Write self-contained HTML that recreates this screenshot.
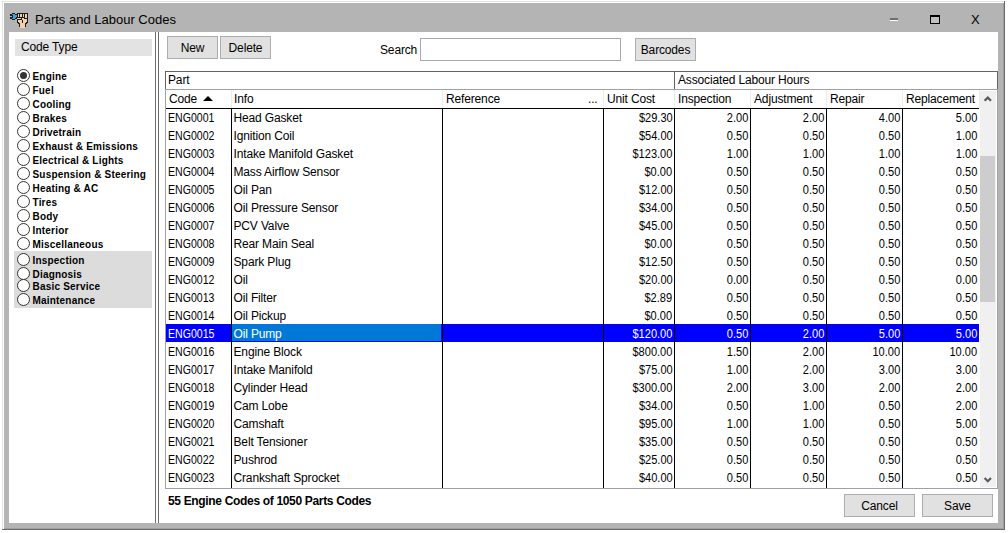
<!DOCTYPE html>
<html><head><meta charset="utf-8">
<style>
*{margin:0;padding:0;box-sizing:border-box}
html,body{width:1008px;height:533px;overflow:hidden;background:#fff;position:relative;font-family:"Liberation Sans",sans-serif;color:#000}
.a{position:absolute}
.t{position:absolute;white-space:nowrap;font-size:12px;line-height:13px;letter-spacing:-0.15px}
.cd{letter-spacing:0;transform:scaleX(0.88);transform-origin:0 0}
.nm{letter-spacing:-0.55px}
.btn{position:absolute;background:#e1e1e1;border:1px solid #adadad;font-size:12px;text-align:center;letter-spacing:-0.15px;padding-top:1px}
.rb{position:absolute;width:13px;height:13px;border:1px solid #333;border-radius:50%;background:#fff}
.rl{position:absolute;white-space:nowrap;font-size:10px;font-weight:bold;line-height:12px;letter-spacing:0.2px}
.vl{position:absolute;width:1px;background:#000}
.num{position:absolute;white-space:nowrap;font-size:12px;line-height:13px;text-align:right;letter-spacing:0;transform:scaleX(0.92);transform-origin:100% 0}
</style></head><body>

<div class="a" style="left:2px;top:1px;width:1003px;height:529px;background:#e3e3e3"></div>
<div class="a" style="left:3px;top:2px;width:1001px;height:527px;background:#fff"></div>
<div class="a" style="left:1004px;top:1px;width:1px;height:529px;background:#6a6a6a"></div>
<div class="a" style="left:2px;top:529px;width:1003px;height:1px;background:#6a6a6a"></div>
<div class="a" style="left:4px;top:3px;width:1000px;height:526px;background:#b4b4b4"></div>
<div class="a" style="left:1003px;top:3px;width:1px;height:526px;background:#a0a0a0"></div>
<div class="a" style="left:4px;top:528px;width:1000px;height:1px;background:#a0a0a0"></div>
<div class="a" style="left:9px;top:32px;width:989px;height:491px;background:#fff"></div>
<div class="t" style="left:35px;top:12px;font-size:13px;line-height:16px;color:#000;letter-spacing:0">Parts and Labour Codes</div>
<svg class="a" style="left:10px;top:13px" width="18" height="15" viewBox="0 0 18 15" shape-rendering="crispEdges"><rect x="2" y="0" width="1" height="1" fill="#1c1c1c"/><rect x="3" y="0" width="1" height="1" fill="#1c1c1c"/><rect x="4" y="0" width="1" height="1" fill="#1c1c1c"/><rect x="7" y="0" width="1" height="1" fill="#1c1c1c"/><rect x="8" y="0" width="1" height="1" fill="#1c1c1c"/><rect x="9" y="0" width="1" height="1" fill="#1c1c1c"/><rect x="10" y="0" width="1" height="1" fill="#1c1c1c"/><rect x="11" y="0" width="1" height="1" fill="#1c1c1c"/><rect x="12" y="0" width="1" height="1" fill="#1c1c1c"/><rect x="13" y="0" width="1" height="1" fill="#1c1c1c"/><rect x="14" y="0" width="1" height="1" fill="#1c1c1c"/><rect x="15" y="0" width="1" height="1" fill="#1c1c1c"/><rect x="16" y="0" width="1" height="1" fill="#1c1c1c"/><rect x="17" y="0" width="1" height="1" fill="#1c1c1c"/><rect x="0" y="1" width="1" height="1" fill="#1c1c1c"/><rect x="1" y="1" width="1" height="1" fill="#1c1c1c"/><rect x="2" y="1" width="1" height="1" fill="#3aa5d6"/><rect x="3" y="1" width="1" height="1" fill="#3aa5d6"/><rect x="4" y="1" width="1" height="1" fill="#3aa5d6"/><rect x="5" y="1" width="1" height="1" fill="#1c1c1c"/><rect x="6" y="1" width="1" height="1" fill="#1c1c1c"/><rect x="7" y="1" width="1" height="1" fill="#1c1c1c"/><rect x="8" y="1" width="1" height="1" fill="#f5d1ab"/><rect x="9" y="1" width="1" height="1" fill="#1c1c1c"/><rect x="10" y="1" width="1" height="1" fill="#f5d1ab"/><rect x="11" y="1" width="1" height="1" fill="#f5d1ab"/><rect x="12" y="1" width="1" height="1" fill="#1c1c1c"/><rect x="13" y="1" width="1" height="1" fill="#f5d1ab"/><rect x="14" y="1" width="1" height="1" fill="#1c1c1c"/><rect x="15" y="1" width="1" height="1" fill="#f5d1ab"/><rect x="16" y="1" width="1" height="1" fill="#f5d1ab"/><rect x="17" y="1" width="1" height="1" fill="#1c1c1c"/><rect x="0" y="2" width="1" height="1" fill="#1c1c1c"/><rect x="1" y="2" width="1" height="1" fill="#1c1c1c"/><rect x="2" y="2" width="1" height="1" fill="#1c1c1c"/><rect x="3" y="2" width="1" height="1" fill="#3aa5d6"/><rect x="4" y="2" width="1" height="1" fill="#3aa5d6"/><rect x="5" y="2" width="1" height="1" fill="#3aa5d6"/><rect x="6" y="2" width="1" height="1" fill="#3aa5d6"/><rect x="7" y="2" width="1" height="1" fill="#1c1c1c"/><rect x="8" y="2" width="1" height="1" fill="#f5d1ab"/><rect x="9" y="2" width="1" height="1" fill="#1c1c1c"/><rect x="10" y="2" width="1" height="1" fill="#f5d1ab"/><rect x="11" y="2" width="1" height="1" fill="#f5d1ab"/><rect x="12" y="2" width="1" height="1" fill="#1c1c1c"/><rect x="13" y="2" width="1" height="1" fill="#f5d1ab"/><rect x="14" y="2" width="1" height="1" fill="#1c1c1c"/><rect x="15" y="2" width="1" height="1" fill="#f5d1ab"/><rect x="16" y="2" width="1" height="1" fill="#f5d1ab"/><rect x="17" y="2" width="1" height="1" fill="#1c1c1c"/><rect x="2" y="3" width="1" height="1" fill="#1c1c1c"/><rect x="3" y="3" width="1" height="1" fill="#3aa5d6"/><rect x="4" y="3" width="1" height="1" fill="#3aa5d6"/><rect x="5" y="3" width="1" height="1" fill="#3aa5d6"/><rect x="6" y="3" width="1" height="1" fill="#3aa5d6"/><rect x="7" y="3" width="1" height="1" fill="#1c1c1c"/><rect x="8" y="3" width="1" height="1" fill="#f5d1ab"/><rect x="9" y="3" width="1" height="1" fill="#1c1c1c"/><rect x="10" y="3" width="1" height="1" fill="#f5d1ab"/><rect x="11" y="3" width="1" height="1" fill="#f5d1ab"/><rect x="12" y="3" width="1" height="1" fill="#1c1c1c"/><rect x="13" y="3" width="1" height="1" fill="#f5d1ab"/><rect x="14" y="3" width="1" height="1" fill="#1c1c1c"/><rect x="15" y="3" width="1" height="1" fill="#f5d1ab"/><rect x="16" y="3" width="1" height="1" fill="#f5d1ab"/><rect x="17" y="3" width="1" height="1" fill="#1c1c1c"/><rect x="0" y="4" width="1" height="1" fill="#1c1c1c"/><rect x="1" y="4" width="1" height="1" fill="#1c1c1c"/><rect x="2" y="4" width="1" height="1" fill="#1c1c1c"/><rect x="3" y="4" width="1" height="1" fill="#3aa5d6"/><rect x="4" y="4" width="1" height="1" fill="#3aa5d6"/><rect x="5" y="4" width="1" height="1" fill="#3aa5d6"/><rect x="6" y="4" width="1" height="1" fill="#1c1c1c"/><rect x="7" y="4" width="1" height="1" fill="#1c1c1c"/><rect x="8" y="4" width="1" height="1" fill="#1c1c1c"/><rect x="9" y="4" width="1" height="1" fill="#1c1c1c"/><rect x="10" y="4" width="1" height="1" fill="#1c1c1c"/><rect x="11" y="4" width="1" height="1" fill="#1c1c1c"/><rect x="12" y="4" width="1" height="1" fill="#1c1c1c"/><rect x="13" y="4" width="1" height="1" fill="#1c1c1c"/><rect x="14" y="4" width="1" height="1" fill="#1c1c1c"/><rect x="15" y="4" width="1" height="1" fill="#f5d1ab"/><rect x="16" y="4" width="1" height="1" fill="#f5d1ab"/><rect x="17" y="4" width="1" height="1" fill="#1c1c1c"/><rect x="0" y="5" width="1" height="1" fill="#1c1c1c"/><rect x="1" y="5" width="1" height="1" fill="#1c1c1c"/><rect x="2" y="5" width="1" height="1" fill="#3aa5d6"/><rect x="3" y="5" width="1" height="1" fill="#3aa5d6"/><rect x="4" y="5" width="1" height="1" fill="#3aa5d6"/><rect x="5" y="5" width="1" height="1" fill="#1c1c1c"/><rect x="6" y="5" width="1" height="1" fill="#1c1c1c"/><rect x="7" y="5" width="1" height="1" fill="#f5d1ab"/><rect x="8" y="5" width="1" height="1" fill="#f5d1ab"/><rect x="9" y="5" width="1" height="1" fill="#f5d1ab"/><rect x="10" y="5" width="1" height="1" fill="#f5d1ab"/><rect x="11" y="5" width="1" height="1" fill="#1c1c1c"/><rect x="12" y="5" width="1" height="1" fill="#f5d1ab"/><rect x="13" y="5" width="1" height="1" fill="#f5d1ab"/><rect x="14" y="5" width="1" height="1" fill="#1c1c1c"/><rect x="15" y="5" width="1" height="1" fill="#1c1c1c"/><rect x="16" y="5" width="1" height="1" fill="#1c1c1c"/><rect x="17" y="5" width="1" height="1" fill="#1c1c1c"/><rect x="2" y="6" width="1" height="1" fill="#1c1c1c"/><rect x="3" y="6" width="1" height="1" fill="#1c1c1c"/><rect x="4" y="6" width="1" height="1" fill="#1c1c1c"/><rect x="7" y="6" width="1" height="1" fill="#1c1c1c"/><rect x="8" y="6" width="1" height="1" fill="#1c1c1c"/><rect x="9" y="6" width="1" height="1" fill="#1c1c1c"/><rect x="10" y="6" width="1" height="1" fill="#1c1c1c"/><rect x="11" y="6" width="1" height="1" fill="#1c1c1c"/><rect x="12" y="6" width="1" height="1" fill="#f5d1ab"/><rect x="13" y="6" width="1" height="1" fill="#f5d1ab"/><rect x="14" y="6" width="1" height="1" fill="#f5d1ab"/><rect x="15" y="6" width="1" height="1" fill="#f5d1ab"/><rect x="16" y="6" width="1" height="1" fill="#f5d1ab"/><rect x="17" y="6" width="1" height="1" fill="#1c1c1c"/><rect x="7" y="7" width="1" height="1" fill="#1c1c1c"/><rect x="8" y="7" width="1" height="1" fill="#f5d1ab"/><rect x="9" y="7" width="1" height="1" fill="#f5d1ab"/><rect x="10" y="7" width="1" height="1" fill="#f5d1ab"/><rect x="11" y="7" width="1" height="1" fill="#f5d1ab"/><rect x="12" y="7" width="1" height="1" fill="#1c1c1c"/><rect x="13" y="7" width="1" height="1" fill="#f5d1ab"/><rect x="14" y="7" width="1" height="1" fill="#f5d1ab"/><rect x="15" y="7" width="1" height="1" fill="#f5d1ab"/><rect x="16" y="7" width="1" height="1" fill="#f5d1ab"/><rect x="17" y="7" width="1" height="1" fill="#1c1c1c"/><rect x="7" y="8" width="1" height="1" fill="#1c1c1c"/><rect x="8" y="8" width="1" height="1" fill="#f5d1ab"/><rect x="9" y="8" width="1" height="1" fill="#f5d1ab"/><rect x="10" y="8" width="1" height="1" fill="#f5d1ab"/><rect x="11" y="8" width="1" height="1" fill="#f5d1ab"/><rect x="12" y="8" width="1" height="1" fill="#1c1c1c"/><rect x="13" y="8" width="1" height="1" fill="#f5d1ab"/><rect x="14" y="8" width="1" height="1" fill="#f5d1ab"/><rect x="15" y="8" width="1" height="1" fill="#f5d1ab"/><rect x="16" y="8" width="1" height="1" fill="#f5d1ab"/><rect x="17" y="8" width="1" height="1" fill="#1c1c1c"/><rect x="7" y="9" width="1" height="1" fill="#1c1c1c"/><rect x="8" y="9" width="1" height="1" fill="#1c1c1c"/><rect x="9" y="9" width="1" height="1" fill="#f5d1ab"/><rect x="10" y="9" width="1" height="1" fill="#f5d1ab"/><rect x="11" y="9" width="1" height="1" fill="#f5d1ab"/><rect x="12" y="9" width="1" height="1" fill="#1c1c1c"/><rect x="13" y="9" width="1" height="1" fill="#f5d1ab"/><rect x="14" y="9" width="1" height="1" fill="#f5d1ab"/><rect x="15" y="9" width="1" height="1" fill="#f5d1ab"/><rect x="16" y="9" width="1" height="1" fill="#1c1c1c"/><rect x="17" y="9" width="1" height="1" fill="#1c1c1c"/><rect x="8" y="10" width="1" height="1" fill="#1c1c1c"/><rect x="9" y="10" width="1" height="1" fill="#1c1c1c"/><rect x="10" y="10" width="1" height="1" fill="#f5d1ab"/><rect x="11" y="10" width="1" height="1" fill="#f5d1ab"/><rect x="12" y="10" width="1" height="1" fill="#f5d1ab"/><rect x="13" y="10" width="1" height="1" fill="#f5d1ab"/><rect x="14" y="10" width="1" height="1" fill="#f5d1ab"/><rect x="15" y="10" width="1" height="1" fill="#1c1c1c"/><rect x="16" y="10" width="1" height="1" fill="#1c1c1c"/><rect x="9" y="11" width="1" height="1" fill="#1c1c1c"/><rect x="10" y="11" width="1" height="1" fill="#f5d1ab"/><rect x="11" y="11" width="1" height="1" fill="#f5d1ab"/><rect x="12" y="11" width="1" height="1" fill="#f5d1ab"/><rect x="13" y="11" width="1" height="1" fill="#f5d1ab"/><rect x="14" y="11" width="1" height="1" fill="#f5d1ab"/><rect x="15" y="11" width="1" height="1" fill="#1c1c1c"/><rect x="9" y="12" width="1" height="1" fill="#1c1c1c"/><rect x="10" y="12" width="1" height="1" fill="#f5d1ab"/><rect x="11" y="12" width="1" height="1" fill="#f5d1ab"/><rect x="12" y="12" width="1" height="1" fill="#f5d1ab"/><rect x="13" y="12" width="1" height="1" fill="#f5d1ab"/><rect x="14" y="12" width="1" height="1" fill="#f5d1ab"/><rect x="15" y="12" width="1" height="1" fill="#1c1c1c"/><rect x="9" y="13" width="1" height="1" fill="#1c1c1c"/><rect x="10" y="13" width="1" height="1" fill="#f5d1ab"/><rect x="11" y="13" width="1" height="1" fill="#f5d1ab"/><rect x="12" y="13" width="1" height="1" fill="#f5d1ab"/><rect x="13" y="13" width="1" height="1" fill="#f5d1ab"/><rect x="14" y="13" width="1" height="1" fill="#f5d1ab"/><rect x="15" y="13" width="1" height="1" fill="#1c1c1c"/><rect x="10" y="14" width="1" height="1" fill="#f5d1ab"/><rect x="11" y="14" width="1" height="1" fill="#f5d1ab"/><rect x="12" y="14" width="1" height="1" fill="#f5d1ab"/><rect x="13" y="14" width="1" height="1" fill="#f5d1ab"/><rect x="14" y="14" width="1" height="1" fill="#f5d1ab"/></svg>
<div class="a" style="left:890px;top:18px;width:8px;height:2px;background:#6d6d6d"></div>
<div class="a" style="left:890px;top:20px;width:8px;height:1px;background:#fff"></div>
<div class="a" style="left:930px;top:15px;width:10px;height:9px;border:1px solid #000;border-top-width:2px;background:#c0c0c0"></div>
<div class="t" style="left:971px;top:13px;font-size:13px;line-height:14px;letter-spacing:0">X</div>
<div class="a" style="left:15px;top:39px;width:137px;height:17px;background:#e3e3e3"></div>
<div class="t" style="left:21px;top:40px;font-size:12px;line-height:14px">Code Type</div>
<div class="a" style="left:14px;top:251px;width:138px;height:57px;background:#dcdcdc"></div>
<div class="rb" style="left:17px;top:69px"></div>
<div class="a" style="left:20px;top:72px;width:7px;height:7px;border-radius:50%;background:#333"></div>
<div class="rl" style="left:32.5px;top:71px">Engine</div>
<div class="rb" style="left:17px;top:83px"></div>
<div class="rl" style="left:32.5px;top:85px">Fuel</div>
<div class="rb" style="left:17px;top:97px"></div>
<div class="rl" style="left:32.5px;top:99px">Cooling</div>
<div class="rb" style="left:17px;top:111px"></div>
<div class="rl" style="left:32.5px;top:113px">Brakes</div>
<div class="rb" style="left:17px;top:125px"></div>
<div class="rl" style="left:32.5px;top:127px">Drivetrain</div>
<div class="rb" style="left:17px;top:139px"></div>
<div class="rl" style="left:32.5px;top:141px">Exhaust &amp; Emissions</div>
<div class="rb" style="left:17px;top:153px"></div>
<div class="rl" style="left:32.5px;top:155px">Electrical &amp; Lights</div>
<div class="rb" style="left:17px;top:167px"></div>
<div class="rl" style="left:32.5px;top:169px">Suspension &amp; Steering</div>
<div class="rb" style="left:17px;top:181px"></div>
<div class="rl" style="left:32.5px;top:183px">Heating &amp; AC</div>
<div class="rb" style="left:17px;top:195px"></div>
<div class="rl" style="left:32.5px;top:197px">Tires</div>
<div class="rb" style="left:17px;top:209px"></div>
<div class="rl" style="left:32.5px;top:211px">Body</div>
<div class="rb" style="left:17px;top:223px"></div>
<div class="rl" style="left:32.5px;top:225px">Interior</div>
<div class="rb" style="left:17px;top:237px"></div>
<div class="rl" style="left:32.5px;top:239px">Miscellaneous</div>
<div class="rb" style="left:17px;top:253px"></div>
<div class="rl" style="left:32.5px;top:255px">Inspection</div>
<div class="rb" style="left:17px;top:267px"></div>
<div class="rl" style="left:32.5px;top:269px">Diagnosis</div>
<div class="rb" style="left:17px;top:279px"></div>
<div class="rl" style="left:32.5px;top:281px">Basic Service</div>
<div class="rb" style="left:17px;top:293px"></div>
<div class="rl" style="left:32.5px;top:295px">Maintenance</div>
<div class="a" style="left:155px;top:32px;width:1px;height:491px;background:#6e6e6e"></div>
<div class="a" style="left:158px;top:32px;width:1px;height:491px;background:#6e6e6e"></div>
<div class="btn" style="left:167px;top:36px;width:51px;height:23px;line-height:21px">New</div>
<div class="btn" style="left:220px;top:36px;width:51px;height:23px;line-height:21px">Delete</div>
<div class="t" style="left:380px;top:44px">Search</div>
<div class="a" style="left:420px;top:38px;width:201px;height:23px;border:1px solid #a8a8b0;background:#fff"></div>
<div class="btn" style="left:635px;top:38px;width:61px;height:23px;line-height:21px">Barcodes</div>
<div class="a" style="left:165px;top:71px;width:833px;height:1px;background:#646464"></div>
<div class="a" style="left:165px;top:71px;width:1px;height:19px;background:#646464"></div>
<div class="a" style="left:674px;top:71px;width:1px;height:19px;background:#646464"></div>
<div class="a" style="left:997px;top:71px;width:1px;height:19px;background:#646464"></div>
<div class="a" style="left:165px;top:89px;width:833px;height:1px;background:#a0a0a0"></div>
<div class="t" style="left:168px;top:74px">Part</div>
<div class="t" style="left:678px;top:74px">Associated Labour Hours</div>
<div class="a" style="left:165px;top:90px;width:1px;height:399px;background:#a0a0a8"></div>
<div class="a" style="left:231px;top:90px;width:1px;height:18px;background:#ececec"></div>
<div class="a" style="left:442px;top:90px;width:1px;height:18px;background:#ececec"></div>
<div class="a" style="left:603px;top:90px;width:1px;height:18px;background:#ececec"></div>
<div class="a" style="left:674px;top:90px;width:1px;height:18px;background:#ececec"></div>
<div class="a" style="left:750px;top:90px;width:1px;height:18px;background:#ececec"></div>
<div class="a" style="left:826px;top:90px;width:1px;height:18px;background:#ececec"></div>
<div class="a" style="left:902px;top:90px;width:1px;height:18px;background:#ececec"></div>
<div class="a" style="left:979px;top:90px;width:1px;height:18px;background:#ececec"></div>
<div class="a" style="left:166px;top:108px;width:813px;height:1px;background:#000"></div>
<div class="t" style="left:169px;top:93px">Code</div>
<div class="t" style="left:234px;top:93px">Info</div>
<div class="t" style="left:446px;top:93px">Reference</div>
<div class="t" style="left:607px;top:93px">Unit Cost</div>
<div class="t" style="left:678px;top:93px">Inspection</div>
<div class="t" style="left:754px;top:93px">Adjustment</div>
<div class="t" style="left:830px;top:93px">Repair</div>
<div class="t" style="left:906px;top:93px">Replacement</div>
<svg class="a" style="left:203px;top:96px" width="10" height="5" viewBox="0 0 10 5"><path d="M0 5 L5 0 L10 5Z" fill="#000"/></svg>
<div class="t" style="left:588px;top:93px">...</div>
<div class="a" style="left:166px;top:324px;width:813px;height:18px;background:#0000ff"></div>
<div class="a" style="left:232px;top:324px;width:209px;height:17px;background:#0078d7"></div>
<div class="vl" style="left:231px;top:109px;height:379px"></div>
<div class="vl" style="left:442px;top:109px;height:379px"></div>
<div class="vl" style="left:603px;top:109px;height:379px"></div>
<div class="vl" style="left:674px;top:109px;height:379px"></div>
<div class="vl" style="left:750px;top:109px;height:379px"></div>
<div class="vl" style="left:826px;top:109px;height:379px"></div>
<div class="vl" style="left:902px;top:109px;height:379px"></div>
<div class="t cd" style="left:168px;top:112px;color:#000">ENG0001</div>
<div class="t" style="left:233.5px;top:112px;color:#000">Head Gasket</div>
<div class="num" style="right:335.5px;top:112px;color:#000">$29.30</div>
<div class="num" style="right:259.5px;top:112px;color:#000">2.00</div>
<div class="num" style="right:183.5px;top:112px;color:#000">2.00</div>
<div class="num" style="right:107.5px;top:112px;color:#000">4.00</div>
<div class="num" style="right:30.5px;top:112px;color:#000">5.00</div>
<div class="t cd" style="left:168px;top:130px;color:#000">ENG0002</div>
<div class="t" style="left:233.5px;top:130px;color:#000">Ignition Coil</div>
<div class="num" style="right:335.5px;top:130px;color:#000">$54.00</div>
<div class="num" style="right:259.5px;top:130px;color:#000">0.50</div>
<div class="num" style="right:183.5px;top:130px;color:#000">0.50</div>
<div class="num" style="right:107.5px;top:130px;color:#000">0.50</div>
<div class="num" style="right:30.5px;top:130px;color:#000">1.00</div>
<div class="t cd" style="left:168px;top:148px;color:#000">ENG0003</div>
<div class="t" style="left:233.5px;top:148px;color:#000">Intake Manifold Gasket</div>
<div class="num" style="right:335.5px;top:148px;color:#000">$123.00</div>
<div class="num" style="right:259.5px;top:148px;color:#000">1.00</div>
<div class="num" style="right:183.5px;top:148px;color:#000">1.00</div>
<div class="num" style="right:107.5px;top:148px;color:#000">1.00</div>
<div class="num" style="right:30.5px;top:148px;color:#000">1.00</div>
<div class="t cd" style="left:168px;top:166px;color:#000">ENG0004</div>
<div class="t" style="left:233.5px;top:166px;color:#000">Mass Airflow Sensor</div>
<div class="num" style="right:335.5px;top:166px;color:#000">$0.00</div>
<div class="num" style="right:259.5px;top:166px;color:#000">0.50</div>
<div class="num" style="right:183.5px;top:166px;color:#000">0.50</div>
<div class="num" style="right:107.5px;top:166px;color:#000">0.50</div>
<div class="num" style="right:30.5px;top:166px;color:#000">0.50</div>
<div class="t cd" style="left:168px;top:184px;color:#000">ENG0005</div>
<div class="t" style="left:233.5px;top:184px;color:#000">Oil Pan</div>
<div class="num" style="right:335.5px;top:184px;color:#000">$12.00</div>
<div class="num" style="right:259.5px;top:184px;color:#000">0.50</div>
<div class="num" style="right:183.5px;top:184px;color:#000">0.50</div>
<div class="num" style="right:107.5px;top:184px;color:#000">0.50</div>
<div class="num" style="right:30.5px;top:184px;color:#000">0.50</div>
<div class="t cd" style="left:168px;top:202px;color:#000">ENG0006</div>
<div class="t" style="left:233.5px;top:202px;color:#000">Oil Pressure Sensor</div>
<div class="num" style="right:335.5px;top:202px;color:#000">$34.00</div>
<div class="num" style="right:259.5px;top:202px;color:#000">0.50</div>
<div class="num" style="right:183.5px;top:202px;color:#000">0.50</div>
<div class="num" style="right:107.5px;top:202px;color:#000">0.50</div>
<div class="num" style="right:30.5px;top:202px;color:#000">0.50</div>
<div class="t cd" style="left:168px;top:220px;color:#000">ENG0007</div>
<div class="t" style="left:233.5px;top:220px;color:#000">PCV Valve</div>
<div class="num" style="right:335.5px;top:220px;color:#000">$45.00</div>
<div class="num" style="right:259.5px;top:220px;color:#000">0.50</div>
<div class="num" style="right:183.5px;top:220px;color:#000">0.50</div>
<div class="num" style="right:107.5px;top:220px;color:#000">0.50</div>
<div class="num" style="right:30.5px;top:220px;color:#000">0.50</div>
<div class="t cd" style="left:168px;top:238px;color:#000">ENG0008</div>
<div class="t" style="left:233.5px;top:238px;color:#000">Rear Main Seal</div>
<div class="num" style="right:335.5px;top:238px;color:#000">$0.00</div>
<div class="num" style="right:259.5px;top:238px;color:#000">0.50</div>
<div class="num" style="right:183.5px;top:238px;color:#000">0.50</div>
<div class="num" style="right:107.5px;top:238px;color:#000">0.50</div>
<div class="num" style="right:30.5px;top:238px;color:#000">0.50</div>
<div class="t cd" style="left:168px;top:256px;color:#000">ENG0009</div>
<div class="t" style="left:233.5px;top:256px;color:#000">Spark Plug</div>
<div class="num" style="right:335.5px;top:256px;color:#000">$12.50</div>
<div class="num" style="right:259.5px;top:256px;color:#000">0.50</div>
<div class="num" style="right:183.5px;top:256px;color:#000">0.50</div>
<div class="num" style="right:107.5px;top:256px;color:#000">0.50</div>
<div class="num" style="right:30.5px;top:256px;color:#000">0.50</div>
<div class="t cd" style="left:168px;top:274px;color:#000">ENG0012</div>
<div class="t" style="left:233.5px;top:274px;color:#000">Oil</div>
<div class="num" style="right:335.5px;top:274px;color:#000">$20.00</div>
<div class="num" style="right:259.5px;top:274px;color:#000">0.00</div>
<div class="num" style="right:183.5px;top:274px;color:#000">0.50</div>
<div class="num" style="right:107.5px;top:274px;color:#000">0.50</div>
<div class="num" style="right:30.5px;top:274px;color:#000">0.00</div>
<div class="t cd" style="left:168px;top:292px;color:#000">ENG0013</div>
<div class="t" style="left:233.5px;top:292px;color:#000">Oil Filter</div>
<div class="num" style="right:335.5px;top:292px;color:#000">$2.89</div>
<div class="num" style="right:259.5px;top:292px;color:#000">0.50</div>
<div class="num" style="right:183.5px;top:292px;color:#000">0.50</div>
<div class="num" style="right:107.5px;top:292px;color:#000">0.50</div>
<div class="num" style="right:30.5px;top:292px;color:#000">0.50</div>
<div class="t cd" style="left:168px;top:310px;color:#000">ENG0014</div>
<div class="t" style="left:233.5px;top:310px;color:#000">Oil Pickup</div>
<div class="num" style="right:335.5px;top:310px;color:#000">$0.00</div>
<div class="num" style="right:259.5px;top:310px;color:#000">0.50</div>
<div class="num" style="right:183.5px;top:310px;color:#000">0.50</div>
<div class="num" style="right:107.5px;top:310px;color:#000">0.50</div>
<div class="num" style="right:30.5px;top:310px;color:#000">0.50</div>
<div class="t cd" style="left:168px;top:328px;color:#fff">ENG0015</div>
<div class="t" style="left:233.5px;top:328px;color:#fff">Oil Pump</div>
<div class="num" style="right:335.5px;top:328px;color:#fff">$120.00</div>
<div class="num" style="right:259.5px;top:328px;color:#fff">0.50</div>
<div class="num" style="right:183.5px;top:328px;color:#fff">2.00</div>
<div class="num" style="right:107.5px;top:328px;color:#fff">5.00</div>
<div class="num" style="right:30.5px;top:328px;color:#fff">5.00</div>
<div class="t cd" style="left:168px;top:346px;color:#000">ENG0016</div>
<div class="t" style="left:233.5px;top:346px;color:#000">Engine Block</div>
<div class="num" style="right:335.5px;top:346px;color:#000">$800.00</div>
<div class="num" style="right:259.5px;top:346px;color:#000">1.50</div>
<div class="num" style="right:183.5px;top:346px;color:#000">2.00</div>
<div class="num" style="right:107.5px;top:346px;color:#000">10.00</div>
<div class="num" style="right:30.5px;top:346px;color:#000">10.00</div>
<div class="t cd" style="left:168px;top:364px;color:#000">ENG0017</div>
<div class="t" style="left:233.5px;top:364px;color:#000">Intake Manifold</div>
<div class="num" style="right:335.5px;top:364px;color:#000">$75.00</div>
<div class="num" style="right:259.5px;top:364px;color:#000">1.00</div>
<div class="num" style="right:183.5px;top:364px;color:#000">2.00</div>
<div class="num" style="right:107.5px;top:364px;color:#000">3.00</div>
<div class="num" style="right:30.5px;top:364px;color:#000">3.00</div>
<div class="t cd" style="left:168px;top:382px;color:#000">ENG0018</div>
<div class="t" style="left:233.5px;top:382px;color:#000">Cylinder Head</div>
<div class="num" style="right:335.5px;top:382px;color:#000">$300.00</div>
<div class="num" style="right:259.5px;top:382px;color:#000">2.00</div>
<div class="num" style="right:183.5px;top:382px;color:#000">3.00</div>
<div class="num" style="right:107.5px;top:382px;color:#000">2.00</div>
<div class="num" style="right:30.5px;top:382px;color:#000">2.00</div>
<div class="t cd" style="left:168px;top:400px;color:#000">ENG0019</div>
<div class="t" style="left:233.5px;top:400px;color:#000">Cam Lobe</div>
<div class="num" style="right:335.5px;top:400px;color:#000">$34.00</div>
<div class="num" style="right:259.5px;top:400px;color:#000">0.50</div>
<div class="num" style="right:183.5px;top:400px;color:#000">1.00</div>
<div class="num" style="right:107.5px;top:400px;color:#000">0.50</div>
<div class="num" style="right:30.5px;top:400px;color:#000">2.00</div>
<div class="t cd" style="left:168px;top:418px;color:#000">ENG0020</div>
<div class="t" style="left:233.5px;top:418px;color:#000">Camshaft</div>
<div class="num" style="right:335.5px;top:418px;color:#000">$95.00</div>
<div class="num" style="right:259.5px;top:418px;color:#000">1.00</div>
<div class="num" style="right:183.5px;top:418px;color:#000">1.00</div>
<div class="num" style="right:107.5px;top:418px;color:#000">0.50</div>
<div class="num" style="right:30.5px;top:418px;color:#000">5.00</div>
<div class="t cd" style="left:168px;top:436px;color:#000">ENG0021</div>
<div class="t" style="left:233.5px;top:436px;color:#000">Belt Tensioner</div>
<div class="num" style="right:335.5px;top:436px;color:#000">$35.00</div>
<div class="num" style="right:259.5px;top:436px;color:#000">0.50</div>
<div class="num" style="right:183.5px;top:436px;color:#000">0.50</div>
<div class="num" style="right:107.5px;top:436px;color:#000">0.50</div>
<div class="num" style="right:30.5px;top:436px;color:#000">0.50</div>
<div class="t cd" style="left:168px;top:454px;color:#000">ENG0022</div>
<div class="t" style="left:233.5px;top:454px;color:#000">Pushrod</div>
<div class="num" style="right:335.5px;top:454px;color:#000">$25.00</div>
<div class="num" style="right:259.5px;top:454px;color:#000">0.50</div>
<div class="num" style="right:183.5px;top:454px;color:#000">0.50</div>
<div class="num" style="right:107.5px;top:454px;color:#000">0.50</div>
<div class="num" style="right:30.5px;top:454px;color:#000">0.50</div>
<div class="t cd" style="left:168px;top:472px;color:#000">ENG0023</div>
<div class="t" style="left:233.5px;top:472px;color:#000">Crankshaft Sprocket</div>
<div class="num" style="right:335.5px;top:472px;color:#000">$40.00</div>
<div class="num" style="right:259.5px;top:472px;color:#000">0.50</div>
<div class="num" style="right:183.5px;top:472px;color:#000">0.50</div>
<div class="num" style="right:107.5px;top:472px;color:#000">0.50</div>
<div class="num" style="right:30.5px;top:472px;color:#000">0.50</div>
<div class="a" style="left:997px;top:90px;width:1px;height:399px;background:#a0a0a8"></div>
<div class="a" style="left:165px;top:488px;width:833px;height:1px;background:#a0a0a8"></div>
<div class="a" style="left:980px;top:91px;width:16px;height:396px;background:#f0f0f0"></div>
<div class="a" style="left:980px;top:156px;width:15px;height:146px;background:#cdcdcd"></div>
<svg class="a" style="left:983px;top:95px" width="10" height="8" viewBox="0 0 10 8"><path d="M1.6 5.8 L4.8 2.6 L8 5.8" stroke="#5a5a5a" stroke-width="2.2" fill="none"/></svg>
<svg class="a" style="left:983px;top:476px" width="10" height="8" viewBox="0 0 10 8"><path d="M1.6 2 L4.8 5.2 L8 2" stroke="#5a5a5a" stroke-width="2.2" fill="none"/></svg>
<div class="t" style="left:168px;top:495px;font-weight:bold;font-size:12px;letter-spacing:-0.33px">55 Engine Codes of 1050 Parts Codes</div>
<div class="btn" style="left:844px;top:494px;width:71px;height:23px;line-height:21px">Cancel</div>
<div class="btn" style="left:922px;top:494px;width:71px;height:23px;line-height:21px">Save</div>
</body></html>
